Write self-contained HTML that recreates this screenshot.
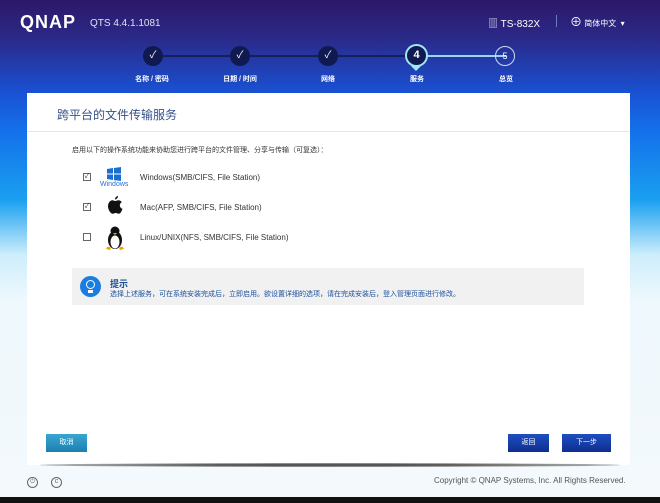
<!DOCTYPE html>
<html><head><meta charset="utf-8"><style>
*{margin:0;padding:0;box-sizing:border-box}
body{width:660px;height:503px;overflow:hidden;position:relative;font-family:"Liberation Sans","Noto Sans CJK SC",sans-serif;
background:linear-gradient(180deg,#2d1868 0px,#2a2a8a 40px,#1a4fd0 90px,#1470ea 130px,#1aa0f0 200px,#cdeefb 255px,#eef8fd 300px,#f4f9fc 503px);}
.abs{position:absolute}
.logo{left:20px;top:12px;color:#fff;font-weight:bold;font-size:18px;letter-spacing:1px}
.ver{left:90px;top:18px;color:#dfe3f5;font-size:10px}
.dev{left:488px;top:15px;color:#fff;font-size:10px}
.lang{left:570px;top:13px;color:#fff;font-size:8px}
.step{width:20px;height:20px;border-radius:50%;background:#101a50;color:#fff;font-size:10px;text-align:center;line-height:20px;top:46px}
.lbl{color:#fff;font-size:7px;top:74px;font-weight:bold;width:60px;text-align:center}
.card{left:27px;top:93px;width:603px;height:372px;background:#fff}
.title{left:57px;top:106px;color:#34508a;font-size:12px}
.hr{left:27px;top:131px;width:603px;height:1px;background:#e6e6e6}
.txt{color:#333;font-size:8px}
.cb{width:8px;height:8px;border:1px solid #666;font-size:7px;line-height:6px;text-align:center;color:#333}
.tip{left:72px;top:268px;width:512px;height:37px;background:#f1f1f1}
.btn{height:18px;color:#fff;font-size:7px;text-align:center;line-height:18px}
</style></head><body>
<div class="abs logo">QNAP</div>
<div class="abs ver">QTS 4.4.1.1081</div>
<div class="abs dev">▥ TS-832X</div>
<div class="abs" style="left:556px;top:15px;width:1px;height:12px;background:#6a7ac0"></div>
<div class="abs lang"><span style="font-size:12px">⊕</span> 简体中文 &nbsp;▾</div>
<div class="abs" style="left:153px;top:55px;width:265px;height:2px;background:#14205a"></div>
<div class="abs" style="left:418px;top:55px;width:88px;height:2px;background:#9ad3f5"></div>
<div class="abs step" style="left:143px">✓</div>
<div class="abs step" style="left:230px">✓</div>
<div class="abs step" style="left:318px">✓</div>
<div class="abs step" style="left:405px;top:44px;width:23px;height:23px;line-height:19px;border:2px solid #9ee8f5;font-weight:bold;font-size:11px">4</div>
<div class="abs" style="left:411px;top:66px;width:0;height:0;border-left:5px solid transparent;border-right:5px solid transparent;border-top:5px solid #9ee8f5"></div>
<div class="abs step" style="left:495px;background:transparent;border:1px solid #cde;font-size:9px;line-height:18px">5</div>
<div class="abs lbl" style="left:122px">名称 / 密码</div>
<div class="abs lbl" style="left:210px">日期 / 时间</div>
<div class="abs lbl" style="left:298px">网络</div>
<div class="abs lbl" style="left:387px">服务</div>
<div class="abs lbl" style="left:476px">总览</div>
<div class="abs card"></div>
<div class="abs title">跨平台的文件传输服务</div>
<div class="abs hr"></div>
<div class="abs txt" style="left:72px;top:145px;font-size:7px">启用以下的操作系统功能来协助您进行跨平台的文件管理、分享与传输（可复选）：</div>
<div class="abs cb" style="left:83px;top:173px">✓</div>
<div class="abs cb" style="left:83px;top:203px">✓</div>
<div class="abs cb" style="left:83px;top:233px"></div>
<svg class="abs" style="left:107px;top:167px" width="14" height="14" viewBox="0 0 14 14"><path d="M0 2l6-1v5.5H0zM7 1l7-1v6.5H7zM0 7.5h6V13l-6-1zM7 7.5h7V14l-7-1z" fill="#1b6fd0"/></svg>
<div class="abs" style="left:100px;top:181px;font-size:7px;color:#2a6fd0">Windows</div>
<svg class="abs" style="left:107px;top:196px" width="16" height="20" viewBox="0 0 16 20"><path d="M11 0c0 2-1.5 3.5-3 3.5C8 1.5 9.5.2 11 0zM8 5c1.5 0 2.2-.8 3.5-.8 1.2 0 2.5.7 3.3 1.9-3 1.7-2.4 5.8.7 6.8-.7 2-2 4.9-3.7 4.9-1.3 0-1.5-.8-3-.8s-2 .8-3.1.8C3.8 17.8 1 14 1 10.3 1 6.6 3.4 4.3 5.5 4.3 6.6 4.3 7 5 8 5z" fill="#111"/></svg>
<svg class="abs" style="left:104px;top:225px" width="22" height="26" viewBox="0 0 22 26"><ellipse cx="11" cy="15" rx="7" ry="9" fill="#111"/><ellipse cx="11" cy="17" rx="4.5" ry="6.5" fill="#fff"/><circle cx="11" cy="6" r="4.5" fill="#111"/><path d="M9 8h4l-2 2z" fill="#e8a800"/><path d="M2 24c1-3 3-3 5-1l-1 2zM20 24c-1-3-3-3-5-1l1 2z" fill="#e8a800"/></svg>
<div class="abs txt" style="left:140px;top:173px">Windows(SMB/CIFS, File Station)</div>
<div class="abs txt" style="left:140px;top:203px">Mac(AFP, SMB/CIFS, File Station)</div>
<div class="abs txt" style="left:140px;top:233px">Linux/UNIX(NFS, SMB/CIFS, File Station)</div>
<div class="abs tip"></div>
<div class="abs" style="left:80px;top:276px;width:21px;height:21px;border-radius:50%;background:#1b7de0"></div>
<div class="abs" style="left:86px;top:280px;width:9px;height:9px;border-radius:50%;border:1.5px solid #fff"></div>
<div class="abs" style="left:88px;top:290px;width:5px;height:3px;background:#fff"></div>
<div class="abs" style="left:110px;top:277px;font-size:9px;color:#1b4f9a;font-weight:bold">提示</div>
<div class="abs" style="left:110px;top:289px;font-size:7px;color:#1b4f9a">选择上述服务，可在系统安装完成后，立即启用。欲设置详细的选项，请在完成安装后，登入管理页面进行修改。</div>
<div class="abs btn" style="left:46px;top:434px;width:41px;background:linear-gradient(#3aa6d0,#1b80b0)">取消</div>
<div class="abs btn" style="left:508px;top:434px;width:41px;background:linear-gradient(#1e4fc0,#0e2e90)">返回</div>
<div class="abs btn" style="left:562px;top:434px;width:49px;background:linear-gradient(#1e4fc0,#0e2e90)">下一步</div>
<div class="abs" style="left:40px;top:463px;width:580px;height:4px;border-radius:50%;background:radial-gradient(ellipse,#555 30%,rgba(90,90,90,0.2) 90%,transparent)"></div>
<div class="abs" style="left:27px;top:477px;width:11px;height:11px;border-radius:50%;border:1.5px solid #666;font-size:6px;text-align:center;line-height:8px;color:#666">⏻</div>
<div class="abs" style="left:51px;top:477px;width:11px;height:11px;border-radius:50%;border:1.5px solid #666;font-size:7px;text-align:center;line-height:8px;color:#666">c</div>
<div class="abs" style="left:434px;top:476px;font-size:8px;color:#555">Copyright © QNAP Systems, Inc. All Rights Reserved.</div>
<div class="abs" style="left:0;top:497px;width:660px;height:6px;background:#111"></div>
</body></html>
